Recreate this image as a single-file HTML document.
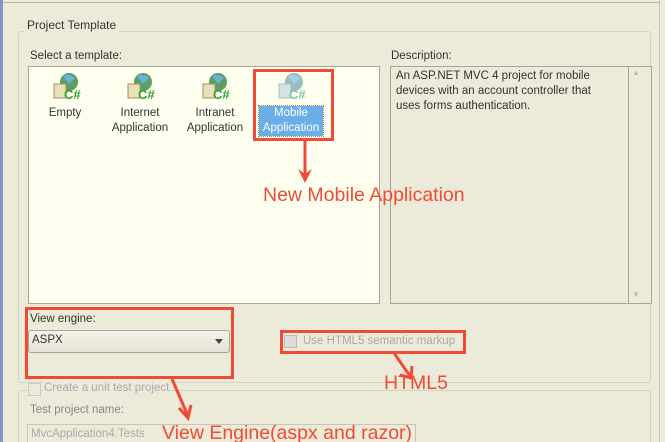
<!DOCTYPE html>
<html><head><style>
html,body{margin:0;width:665px;height:442px;overflow:hidden}
body{background:#ecead8;font-family:"Liberation Sans",sans-serif;font-size:11px;color:#333;position:relative}
.a{position:absolute}
.red{border:3px solid #f04b36;position:absolute;box-sizing:border-box}
.rt{color:#f04b36;font-size:19.5px;position:absolute;white-space:nowrap}
.ic{position:absolute;width:30px;height:30px}
.lbl{position:absolute;text-align:center;line-height:15px;font-size:11.5px;color:#333}
</style></head><body>
<div class="a" style="left:0;top:0;width:3px;height:442px;background:#8890c8"></div>
<div class="a" style="left:3px;top:2px;width:657px;height:1px;background:#b8b6a8"></div>
<div class="a" style="left:659px;top:0;width:1px;height:442px;background:#c8c6b8"></div>
<div class="a" style="left:18px;top:31px;width:631px;height:350px;border:1px solid #d4d2c2;border-radius:3px"></div>
<div class="a" style="left:24px;top:18px;background:#ecead8;padding:0 3px;font-size:12px">Project Template</div>
<div class="a" style="left:30px;top:50px;font-size:11.5px">Select a template:</div>
<div class="a" style="left:28px;top:66px;width:350px;height:236px;border:1px solid #a8a698;background:#fffff0"></div>
<div class="a" style="left:391px;top:50px;font-size:11.5px">Description:</div>
<div class="a" style="left:390px;top:66px;width:260px;height:236px;border:1px solid #a8a698;background:#ecead8"></div>
<div class="a" style="left:391px;top:67px;width:237px;height:236px;border-right:1px solid #a8a698"></div>
<div class="a" style="left:396px;top:69px;width:212px;line-height:15px;font-size:11.5px">An ASP.NET MVC 4 project for mobile devices with an account controller that uses forms authentication.</div>
<div class="a" style="left:632px;top:68px;color:#bbb;font-size:8px">▲</div>
<div class="a" style="left:632px;top:290px;color:#bbb;font-size:8px">▼</div>
<svg class="ic" style="left:51px;top:72px" viewBox="0 0 30 30"><circle cx="18" cy="10" r="9" fill="#5aa060"/><path d="M12 4 Q18 1 24 6 L18 12Z" fill="#6ab0e0"/><rect x="3" y="12" width="12" height="14" fill="#e8e0b8" stroke="#a09060"/><text x="13" y="27" font-size="13" font-weight="bold" fill="#30a030" font-family="Liberation Sans">C#</text></svg>
<svg class="ic" style="left:125px;top:72px" viewBox="0 0 30 30"><circle cx="18" cy="10" r="9" fill="#5aa060"/><path d="M12 4 Q18 1 24 6 L18 12Z" fill="#6ab0e0"/><rect x="3" y="12" width="12" height="14" fill="#e8e0b8" stroke="#a09060"/><text x="13" y="27" font-size="13" font-weight="bold" fill="#30a030" font-family="Liberation Sans">C#</text></svg>
<svg class="ic" style="left:200px;top:72px" viewBox="0 0 30 30"><circle cx="18" cy="10" r="9" fill="#5aa060"/><path d="M12 4 Q18 1 24 6 L18 12Z" fill="#6ab0e0"/><rect x="3" y="12" width="12" height="14" fill="#e8e0b8" stroke="#a09060"/><text x="13" y="27" font-size="13" font-weight="bold" fill="#30a030" font-family="Liberation Sans">C#</text></svg>
<svg class="ic" style="left:276px;top:72px;opacity:.6" viewBox="0 0 30 30"><circle cx="18" cy="10" r="9" fill="#5a90a0"/><path d="M12 4 Q18 1 24 6 L18 12Z" fill="#6ab0e0"/><rect x="3" y="12" width="12" height="14" fill="#b8d0d8" stroke="#7090a0"/><text x="13" y="27" font-size="13" font-weight="bold" fill="#30a070" font-family="Liberation Sans">C#</text></svg>
<div class="lbl" style="left:40px;top:106px;width:50px">Empty</div>
<div class="lbl" style="left:105px;top:106px;width:70px">Internet<br>Application</div>
<div class="lbl" style="left:180px;top:106px;width:70px">Intranet<br>Application</div>
<div class="lbl" style="left:259px;top:106px;width:64px;background:#6aaee8;color:#fff;outline:1px dotted #a09060">Mobile<br>Application</div>
<div class="red" style="left:253px;top:69px;width:81px;height:72px"></div>
<svg class="a" style="left:294px;top:140px" width="22" height="45"><path d="M11 0 L11 38" stroke="#f04b36" stroke-width="3" fill="none"/><path d="M4 29 L11 43 L18 29 L11 34Z" fill="#f04b36"/></svg>
<div class="rt" style="left:263px;top:184px">New Mobile Application</div>
<div class="a" style="left:30px;top:313px;font-size:11.5px">View engine:</div>
<div class="a" style="left:28px;top:330px;width:200px;height:21px;border:1px solid #a8a698;border-radius:3px;background:linear-gradient(#f4f3ea,#e4e2d4)"></div>
<div class="a" style="left:32px;top:334px;font-size:11.5px">ASPX</div>
<div class="a" style="left:215px;top:339px;width:0;height:0;border-left:4px solid transparent;border-right:4px solid transparent;border-top:5px solid #444"></div>
<div class="red" style="left:25px;top:307px;width:209px;height:72px"></div>
<div class="a" style="left:284px;top:335px;width:11px;height:11px;border:1px solid #bbb;background:#ddd"></div>
<div class="a" style="left:303px;top:335px;color:#aaa;font-size:11.5px">Use HTML5 semantic markup</div>
<div class="red" style="left:280px;top:330px;width:186px;height:24px"></div>
<svg class="a" style="left:390px;top:352px" width="30" height="30"><path d="M4 1 L20 24 M10 23 L21 26 L22 14" stroke="#f04b36" stroke-width="3" fill="none"/></svg>
<div class="rt" style="left:384px;top:372px">HTML5</div>
<div class="a" style="left:18px;top:390px;width:631px;height:60px;border:1px solid #d4d2c2;border-radius:3px"></div>
<div class="a" style="left:28px;top:383px;width:11px;height:11px;border:1px solid #ccc;background:#ecead8"></div>
<div class="a" style="left:44px;top:382px;color:#aaa;font-size:11.5px;background:#ecead8">Create a unit test project</div>
<div class="a" style="left:30px;top:404px;color:#888;font-size:11.5px">Test project name:</div>
<div class="a" style="left:27px;top:424px;width:387px;height:22px;border:1px solid #c8c6b8;background:#ecead8"></div>
<div class="a" style="left:31px;top:428px;color:#aaa;font-size:11.5px">MvcApplication4.Tests</div>
<svg class="a" style="left:168px;top:378px" width="30" height="45"><path d="M4 1 L20 38 M11 30 L20 40 L23 27" stroke="#f04b36" stroke-width="3" fill="none"/></svg>
<div class="rt" style="left:162px;top:422px">View Engine(aspx and razor)</div>
</body></html>
